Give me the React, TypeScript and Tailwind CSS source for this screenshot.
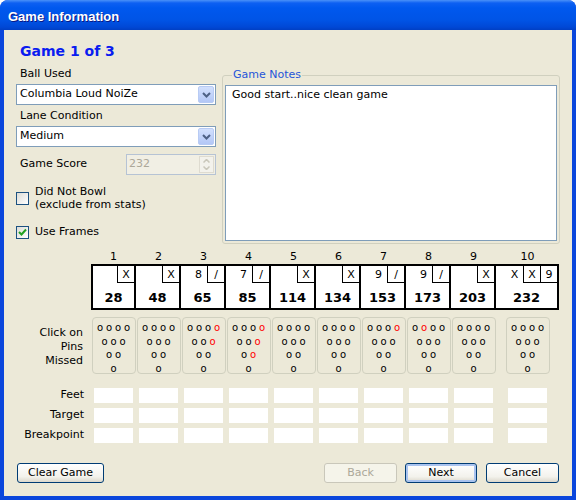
import React from "react";

type Frame = { n: string; cells: string[]; score: number; red: number[] };

const frames: Frame[] = [
  { n: "1", cells: ["", "X"], score: 28, red: [] },
  { n: "2", cells: ["", "X"], score: 48, red: [] },
  { n: "3", cells: ["8", "/"], score: 65, red: [10, 6] },
  { n: "4", cells: ["7", "/"], score: 85, red: [10, 6, 3] },
  { n: "5", cells: ["", "X"], score: 114, red: [] },
  { n: "6", cells: ["", "X"], score: 134, red: [] },
  { n: "7", cells: ["9", "/"], score: 153, red: [10] },
  { n: "8", cells: ["9", "/"], score: 173, red: [8] },
  { n: "9", cells: ["", "X"], score: 203, red: [] },
  { n: "10", cells: ["X", "X", "9"], score: 232, red: [] },
];

const pinRows = [
  [7, 8, 9, 10],
  [4, 5, 6],
  [2, 3],
  [1],
];

const colW = (i: number) => (i === 9 ? "w-[63px]" : "w-[45px]");

function Chevron() {
  return (
    <svg width="9" height="6" viewBox="0 0 9 6">
      <path d="M1 1 L4.5 4.5 L8 1" fill="none" stroke="#4d6185" strokeWidth="2" />
    </svg>
  );
}

function Select({ value }: { value: string }) {
  return (
    <div className="flex h-[21px] w-[200px] items-stretch border border-[#7f9db9] bg-white">
      <div className="flex flex-1 items-center pl-[3px]">{value}</div>
      <div className="m-[1px] flex w-[16px] items-center justify-center rounded-[2px] border border-[#b8cbf4] bg-[linear-gradient(to_bottom,#d2e0fd,#b3c7f6)]">
        <Chevron />
      </div>
    </div>
  );
}

function Checkbox({ checked }: { checked?: boolean }) {
  return (
    <div className="flex h-[13px] w-[13px] shrink-0 items-center justify-center border border-[#1c5180] bg-[linear-gradient(135deg,#dcdcd7,#ffffff)]">
      {checked && (
        <svg width="9" height="9" viewBox="0 0 9 9">
          <path d="M1 4 L3.5 6.5 L8 1.5" fill="none" stroke="#21a121" strokeWidth="2" />
        </svg>
      )}
    </div>
  );
}

function Button({ label, width, disabled, focused }: { label: string; width: string; disabled?: boolean; focused?: boolean }) {
  return (
    <div
      className={
        "flex h-[20px] items-center justify-center rounded-[3px] border " +
        width +
        " " +
        (disabled
          ? "border-[#c9c7ba] bg-[#f5f4ea] text-[#aca899]"
          : "border-[#003c74] bg-[linear-gradient(to_bottom,#ffffff,#f3f2ec_70%,#dcd8cc)] text-black") +
        (focused ? " shadow-[inset_0_0_0_2px_#a9c3ef]" : "")
      }
    >
      {label}
    </div>
  );
}

export default function App() {
  return (
    <div className="h-[500px] w-[576px] overflow-hidden rounded-t-[8px] bg-[#0a46dc] font-['DejaVu_Sans',sans-serif] text-[11px] text-black">
      {/* title bar */}
      <div className="flex h-[30px] items-center bg-[linear-gradient(to_bottom,#4a91f8_0px,#0d60f2_3px,#0058ee_8px,#0054e6_20px,#0048d6_27px,#003fc4_30px)] pl-[8px] pt-[3px]">
        <span className="font-['Liberation_Sans',sans-serif] text-[13px] font-bold text-white [text-shadow:1px_1px_#0a1883]">
          Game Information
        </span>
      </div>

      <div className="mx-[4px] flex h-[466px] flex-col bg-[#ece9d8] pt-[10px]">
        <div className="h-[22px] pl-[16px] text-[14px] font-bold leading-[22px] text-[#0a1cf0]">Game 1 of 3</div>

        {/* top section */}
        <div className="flex pl-[12px]">
          <div className="flex w-[200px] flex-col">
            <div className="mt-[4px] pl-[4px] leading-[16px]">Ball Used</div>
            <div className="mt-[2px]">
              <Select value="Columbia Loud NoiZe" />
            </div>
            <div className="mt-[3px] pl-[4px] leading-[16px]">Lane Condition</div>
            <div className="mt-[2px]">
              <Select value="Medium" />
            </div>
            <div className="mt-[7px] flex items-center">
              <div className="flex-1 pl-[4px]">Game Score</div>
              <div className="flex h-[21px] w-[90px] border border-[#b6c3d4] bg-[#f1efe4]">
                <div className="flex flex-1 items-center pl-[2px] text-[#aca899]">232</div>
                <div className="m-[1px] flex w-[15px] flex-col border border-[#dedbd0] bg-[#f3f2ec]">
                  <div className="flex flex-1 items-center justify-center">
                    <svg width="7" height="4" viewBox="0 0 7 4">
                      <path d="M0.5 3.5 L3.5 0.5 L6.5 3.5" fill="none" stroke="#c9c7ba" strokeWidth="1.5" />
                    </svg>
                  </div>
                  <div className="flex flex-1 items-center justify-center">
                    <svg width="7" height="4" viewBox="0 0 7 4">
                      <path d="M0.5 0.5 L3.5 3.5 L6.5 0.5" fill="none" stroke="#c9c7ba" strokeWidth="1.5" />
                    </svg>
                  </div>
                </div>
              </div>
            </div>
            <div className="mt-[10px] flex items-start gap-[6px]">
              <div className="mt-[7px]">
                <Checkbox />
              </div>
              <div className="leading-[13px]">
                Did Not Bowl
                <br />
                (exclude from stats)
              </div>
            </div>
            <div className="mt-[15px] flex h-[13px] items-center gap-[6px]">
              <Checkbox checked />
              <span>Use Frames</span>
            </div>
          </div>

          <fieldset className="ml-[6px] mt-[6px] h-[176px] w-[338px] rounded-[3px] border border-[#d0d0bf] px-[2px] pb-[2px]">
            <legend className="ml-[7px] px-[1px] leading-[14px] text-[#1f55d8]">Game Notes</legend>
            <div className="mt-[3px] h-[156px] border border-[#7f9db9] bg-white pl-[6px] pt-[2px] leading-[14px]">
              Good start..nice clean game
            </div>
          </fieldset>
        </div>

        {/* frame numbers */}
        <div className="mt-[6px] flex h-[14px]">
          <div className="w-[87px]" />
          {frames.map((f, i) => (
            <div key={f.n} className={colW(i) + " text-center leading-[14px]"}>
              {f.n}
            </div>
          ))}
        </div>

        {/* frame boxes */}
        <div className="flex">
          <div className="w-[87px]" />
          {frames.map((f, i) => (
            <div
              key={f.n}
              className={
                colW(i) +
                " flex h-[46px] flex-col border-y-2 border-r-2 border-black bg-white" +
                (i === 0 ? " border-l-2" : "")
              }
            >
              <div className="flex justify-end">
                {f.cells.map((c, j) => (
                  <div
                    key={j}
                    className={
                      "flex h-[17px] w-[17px] items-center justify-center leading-none" +
                      (j > 0 ? " border-b border-l border-black" : "")
                    }
                  >
                    {c}
                  </div>
                ))}
              </div>
              <div className="flex flex-1 items-center justify-center pt-[4px] text-[13px] font-bold">{f.score}</div>
            </div>
          ))}
        </div>

        {/* pins */}
        <div className="mt-[7px] flex">
          <div className="flex w-[87px] items-center justify-end pr-[8px] pt-[2px]">
            <div className="text-right leading-[14px]">
              Click on
              <br />
              Pins
              <br />
              Missed
            </div>
          </div>
          {frames.map((f, i) => (
            <div key={f.n} className={colW(i) + " flex justify-center"}>
              <div className="flex h-[57px] w-[44px] flex-col items-center rounded-[4px] border border-[#d0d0bf] pt-[3px] text-[10px]">
                {pinRows.map((row, r) => (
                  <div key={r} className="flex h-[13.5px] leading-[13.5px]">
                    {row.map((p) => (
                      <span key={p} className={"w-[9px] text-center " + (f.red.includes(p) ? "text-[#ff0000]" : "text-black")}>
                        o
                      </span>
                    ))}
                  </div>
                ))}
              </div>
            </div>
          ))}
        </div>

        {/* input rows */}
        <div className="mt-[14px] flex flex-col gap-[5px]">
          {["Feet", "Target", "Breakpoint"].map((label) => (
            <div key={label} className="flex h-[15px] items-center">
              <div className="w-[87px] pr-[7px] text-right">{label}</div>
              {frames.map((f, i) => (
                <div key={f.n} className={colW(i) + " flex justify-center"}>
                  <div className="h-[15px] w-[39px] bg-white" />
                </div>
              ))}
            </div>
          ))}
        </div>

        {/* buttons */}
        <div className="mt-[20px] flex items-center pl-[13px] pr-[13px]">
          <Button label="Clear Game" width="w-[87px]" />
          <div className="flex-1" />
          <Button label="Back" width="w-[73px]" disabled />
          <div className="ml-[8px]">
            <Button label="Next" width="w-[72px]" focused />
          </div>
          <div className="ml-[9px]">
            <Button label="Cancel" width="w-[73px]" />
          </div>
        </div>
      </div>
    </div>
  );
}
